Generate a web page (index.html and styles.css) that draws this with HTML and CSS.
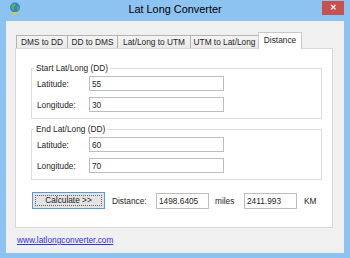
FILE: index.html
```html
<!DOCTYPE html>
<html lang="en">
<head>
    <meta charset="UTF-8">
    <title>Lat Long Converter</title>
    <link rel="stylesheet" href="styles.css">
</head>
<body>

<div class="window">
    <!-- Title bar -->
    <div class="titlebar">
        <svg class="app-icon" width="12" height="14" viewBox="0 0 12 14">
            <circle cx="6" cy="5.5" r="5" fill="#2d86d2"/>
            <path d="M3 2.5 L6 1.5 L7 3.5 L5 5 L5.5 7.5 L3.5 8 L2 5 Z" fill="#5fb040"/>
            <path d="M8 5 L10 4.5 L10.5 7 L8.5 8.5 Z" fill="#5fb040"/>
            <path d="M3.5 10 L8.5 10 L7.5 13 L4.5 13 Z" fill="#e8c230"/>
        </svg>
        <div class="title">Lat Long Converter</div>
        <div class="close">&#x2715;</div>
    </div>

    <div class="client">
        <!-- Tabs -->
        <div class="tabs">
            <div class="tab t1">DMS to DD</div>
            <div class="tab t2">DD to DMS</div>
            <div class="tab t3">Lat/Long to UTM</div>
            <div class="tab t4">UTM to Lat/Long</div>
            <div class="tab active">Distance</div>
        </div>

        <div class="panel">
            <div class="group">
                <div class="legend">Start Lat/Long (DD)</div>
                <div class="row">
                    <label>Latitude:</label>
                    <input type="text" value="55">
                </div>
                <div class="row">
                    <label>Longitude:</label>
                    <input type="text" value="30">
                </div>
            </div>

            <div class="group second">
                <div class="legend">End Lat/Long (DD)</div>
                <div class="row">
                    <label>Latitude:</label>
                    <input type="text" value="60">
                </div>
                <div class="row">
                    <label>Longitude:</label>
                    <input type="text" value="70">
                </div>
            </div>

            <div class="result-row">
                <button class="calc"><span>Calculate &gt;&gt;</span></button>
                <span class="dist-label">Distance:</span>
                <input type="text" class="small" value="1498.6405">
                <span class="unit-miles">miles</span>
                <input type="text" class="small" value="2411.993">
                <span class="unit-km">KM</span>
            </div>
        </div>

        <a class="site-link" href="#">www.latlongconverter.com</a>
    </div>
</div>

</body>
</html>
```

FILE: styles.css
```css
body {
    margin: 0;
    font-family: "Liberation Sans", Arial, sans-serif;
    font-size: 8.3px;
    color: #1e1e1e;
}
.window {
    width: 350px;
    height: 258px;
    background: #8cc3f1;
    display: flex;
    flex-direction: column;
}
.titlebar {
    height: 21px;
    display: grid;
    grid-template-columns: 1fr auto 1fr;
    align-items: center;
}
.app-icon {
    margin-left: 9px;
    margin-top: -4px;
}
.title {
    font-size: 10.9px;
    color: #000;
    margin-top: -4px;
}
.close {
    justify-self: end;
    align-self: start;
    width: 22px;
    height: 14px;
    margin: 1px 6px 0 0;
    background: #c75050;
    color: #fff;
    font-size: 8px;
    font-weight: bold;
    line-height: 14px;
    text-align: center;
}
.client {
    margin: 0 6px;
    height: 232px;
    background: #f0f0f0;
    padding: 11px 0 0 9px;
    box-sizing: border-box;
}
.tabs {
    display: flex;
    align-items: flex-end;
    height: 16px;
    margin-left: 1px;
}
.tab {
    height: 13px;
    line-height: 13px;
    box-sizing: border-box;
    border: 1px solid #b4b4b4;
    border-bottom: none;
    background: linear-gradient(#f4f4f4, #e9e9e9);
    text-align: center;
    margin-left: -1px;
}
.t1 { width: 52px; margin-left: 0; }
.t2 { width: 51px; }
.t3 { width: 74px; }
.t4 { width: 69px; }
.tab.active {
    width: 44px;
    height: 17px;
    line-height: 14px;
    margin-bottom: -1px;
    background: #fff;
    border-color: #c8c8c8;
    position: relative;
}
.panel {
    width: 318px;
    height: 180px;
    box-sizing: border-box;
    border: 1px solid #d9d9d9;
    background: #fff;
    padding: 19px 10px 0 15px;
}
.group {
    border: 1px solid #dcdcdc;
    padding: 0 0 6px 5px;
}
.group.second {
    margin-top: 10px;
}
.legend {
    width: fit-content;
    line-height: 10px;
    margin: -6px 0 0 -3px;
    padding: 0 2px;
    background: #fff;
}
.row {
    display: flex;
    align-items: center;
    margin-top: 6px;
}
.legend + .row {
    margin-top: 3px;
}
.row label {
    width: 52px;
}
input {
    width: 135px;
    height: 15px;
    box-sizing: border-box;
    border: 1px solid #bdbdbd;
    padding: 0 0 0 2px;
    margin: 0;
    font-family: "Liberation Sans", Arial, sans-serif;
    font-size: 8.3px;
    color: #1e1e1e;
    background: #fff;
}
.result-row {
    display: flex;
    align-items: center;
    margin-top: 12px;
}
.calc {
    width: 73px;
    height: 17px;
    margin: 0 0 0 1px;
    padding: 2px;
    box-sizing: border-box;
    border: 1px solid #5a9ad8;
    background: #e3e3e3;
    font-family: "Liberation Sans", Arial, sans-serif;
    font-size: 8.3px;
    color: #1e1e1e;
}
.calc span {
    display: block;
    height: 100%;
    box-sizing: border-box;
    border: 1px dotted #666;
    line-height: 9px;
}
.dist-label {
    width: 44px;
    margin-left: 7px;
}
input.small {
    width: 53px;
    height: 16px;
}
.unit-miles {
    width: 29px;
    margin-left: 6px;
}
.unit-km {
    margin-left: 7px;
}
.site-link {
    display: inline-block;
    margin: 7px 0 0 2px;
    line-height: 10px;
    color: #2f2fe6;
    text-decoration: underline;
}
```
